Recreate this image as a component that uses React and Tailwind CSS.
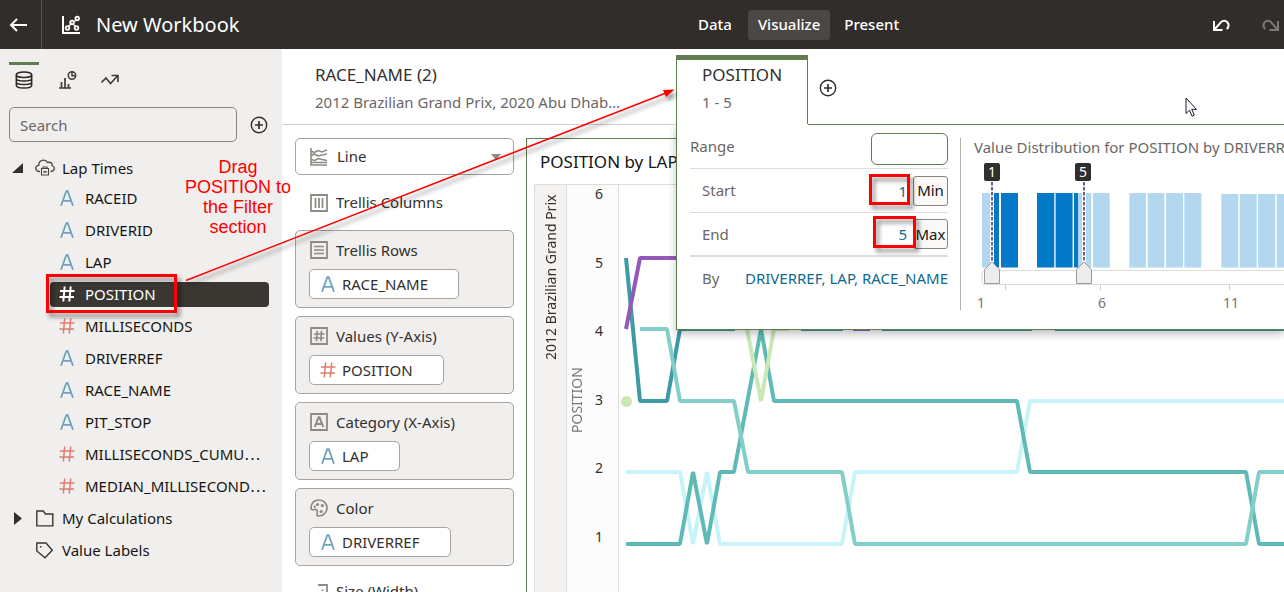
import React from "react";

const FONT = "font-['Noto_Sans','Open_Sans',sans-serif]";

const fields = [
  { name: "RACEID", type: "text" },
  { name: "DRIVERID", type: "text" },
  { name: "LAP", type: "text" },
  { name: "POSITION", type: "number", selected: true },
  { name: "MILLISECONDS", type: "number" },
  { name: "DRIVERREF", type: "text" },
  { name: "RACE_NAME", type: "text" },
  { name: "PIT_STOP", type: "text" },
  { name: "MILLISECONDS_CUMU", type: "number", cut: true },
  { name: "MEDIAN_MILLISECOND", type: "number", cut: true },
];

function TypeIcon({ type, selected }) {
  if (type === "number") {
    return (
      <svg width="16" height="16" viewBox="0 0 16 16" fill="none" strokeWidth={selected ? 2 : 1.5}
        className={selected ? "shrink-0 stroke-white" : "shrink-0 stroke-[#dd7d6d]"} aria-hidden="true">
        <path d="M5.7 .5 4.3 15.5M11.7 .5 10.3 15.5M1 5h14.5M.5 11H15" />
      </svg>
    );
  }
  return (
    <svg width="16" height="16" viewBox="0 0 16 16" fill="none" strokeWidth="1.8" className="shrink-0 stroke-[#6fa3bd]" aria-hidden="true">
      <path d="M2 15.800 7.300 1.200h1.400L14 15.800M3.800 10.800h8.400" />
    </svg>
  );
}

function PlusCircle() {
  return (
    <svg width="18" height="18" viewBox="0 0 18 18" fill="none" stroke="#33302d" strokeWidth="1.4" aria-hidden="true">
      <circle cx="9" cy="9" r="7.7" />
      <path d="M9 5v8M5 9h8" strokeWidth="1.7" />
    </svg>
  );
}

function Header() {
  return (
    <header className="flex h-[49px] shrink-0 items-center bg-[#312d2a] text-white">
      <button aria-label="Back" className="flex h-full w-[42px] items-center border-r border-[#5a5653] pl-[9px]">
        <svg width="20" height="16" viewBox="0 0 20 16" fill="none" stroke="white" strokeWidth="2">
          <path d="M18 8H2M8 2 2 8l6 6" />
        </svg>
      </button>
      <svg className="ml-5" width="18" height="20" viewBox="0 0 18 20" fill="none" stroke="white" strokeWidth="1.8" aria-hidden="true">
        <path d="M1 1v17h17" strokeWidth="2" />
        <path d="m6 12 4-4M11 9l3 3M12 7l3-3" strokeWidth="1.2" />
        <circle cx="5.5" cy="13" r="1.8" />
        <circle cx="10" cy="7.5" r="1.8" />
        <circle cx="14.5" cy="13" r="1.8" />
        <circle cx="15.2" cy="3.5" r="1.8" />
      </svg>
      <h1 className="ml-4 w-[592px] text-[20px]">New Workbook</h1>
      <nav className="flex h-[30px] items-center text-[15px] font-medium">
        <button className="h-full px-[10px]">Data</button>
        <button className="ml-[6px] h-full rounded-[3px] bg-[#4b4744] px-[10px]">Visualize</button>
        <button className="ml-[4px] h-full px-[10px]">Present</button>
      </nav>
      <div className="ml-auto flex gap-8">
        <button aria-label="Undo">
          <svg width="18" height="16" viewBox="0 0 18 16" fill="none" stroke="white" strokeWidth="2">
            <path d="M2 4v9h8.5M2.5 12.5 9 5.2c4-4.4 10.500 1.500 5.800 7" />
          </svg>
        </button>
        <button aria-label="Redo">
          <svg width="22" height="16" viewBox="0 0 22 16" fill="none" stroke="#7c7875" strokeWidth="2">
            <path d="M16 4v9H7.500M15.500 12.500 9 5.200c-4-4.400-10.500 1.500-5.800 7" />
          </svg>
        </button>
      </div>
    </header>
  );
}

function Sidebar() {
  return (
    <aside className="w-[282px] shrink-0 bg-[#f0efee] pt-[13px] text-[15px] text-[#161513]">
      <div className="flex h-[45px] pl-[9px]">
        <button aria-label="Data" className="flex h-[33px] w-[30px] items-center justify-center border-t-[3px] border-[#5f7d4f]">
          <svg width="18" height="18" viewBox="0 0 18 18" fill="none" stroke="#2b2826" strokeWidth="1.5">
            <ellipse cx="9" cy="3.800" rx="7.700" ry="2.800" />
            <path d="M1.300 3.800v10.400c0 3.700 15.400 3.700 15.400 0V3.800M1.300 7.300c0 3.700 15.400 3.700 15.400 0M1.300 10.800c0 3.700 15.400 3.700 15.400 0" />
          </svg>
        </button>
        <button aria-label="Visualizations" className="ml-5 flex h-9 w-[18px] items-center">
          <svg width="18" height="18" viewBox="0 0 18 18" fill="none" stroke="#3f3b38" strokeWidth="1.500">
            <path d="M0 17h12M2.500 17v-6M6 17V7M9.500 17v-4" strokeWidth="1.700" />
            <circle cx="13" cy="4.500" r="3.700" />
            <path d="M13 1v3.700h3.500" />
          </svg>
        </button>
        <button aria-label="Analytics" className="ml-6 flex h-9 w-[18px] items-center">
          <svg width="18" height="14" viewBox="0 0 18 14" fill="none" stroke="#3f3b38" strokeWidth="1.600">
            <path d="m.5 9.500 4.500-4.500 4.500 5.500L16.500 3M10.500 2.500H17V9" />
          </svg>
        </button>
      </div>
      <div className="flex items-center pl-[9px]">
        <input aria-label="Search" placeholder="Search"
          className="h-[35px] w-[228px] rounded-[5px] border border-[#8a8580] bg-transparent px-[10px] placeholder:text-[#6b6764]" />
        <button aria-label="Add data" className="ml-[13px]"><PlusCircle /></button>
      </div>
      <ul className="mt-3">
        <li className="flex h-7 items-center">
          <svg className="ml-3" width="11" height="10" viewBox="0 0 11 10" aria-hidden="true"><path d="M11 0v10H0z" fill="#33302d" /></svg>
          <svg className="ml-3" width="20" height="18" viewBox="0 0 20 18" fill="none" stroke="#4a4643" strokeWidth="1.300" aria-hidden="true">
            <path d="M5 12.500C-.5 12.500-.5 6.500 3.800 6.300 3.500 1 10.500-.5 12.500 3.500c4-1 5 1.500 4.500 3 3.500 1 3 6-1.500 6" />
            <path d="M6.500 9.500h7v6.500h-7zM8 9.500V8h4v1.500M9 14v-1.500h2V14" strokeWidth="1.100" />
          </svg>
          <span className="ml-[7px]">Lap Times</span>
        </li>
        {fields.map((f) => (
          <li key={f.name} className="flex h-8 items-center">
            <div className={"ml-[50px] mr-[13px] flex h-[25px] min-w-0 flex-1 items-center gap-[10px] rounded-[4px] pl-[9px] " +
              (f.selected ? "bg-[#3a3632] text-white" : "")}>
              <TypeIcon type={f.type} selected={f.selected} />
              <span className="whitespace-nowrap">{f.name}{f.cut && <span className="font-['Noto_Sans_CJK_JP',sans-serif]">…</span>}</span>
            </div>
          </li>
        ))}
        <li className="flex h-8 items-center">
          <svg className="ml-[14px]" width="8" height="13" viewBox="0 0 8 13" aria-hidden="true"><path d="M0 0v13l8-6.500z" fill="#33302d" /></svg>
          <svg className="ml-[14px]" width="18" height="17" viewBox="0 0 18 17" fill="none" stroke="#3a3632" strokeWidth="1.400" aria-hidden="true">
            <path d="M.8 15.900V1h6.400l2.300 3h7.300v11.900z" />
          </svg>
          <span className="ml-2">My Calculations</span>
        </li>
        <li className="flex h-8 items-center">
          <svg className="ml-9" width="18" height="17" viewBox="0 0 18 17" fill="none" stroke="#3a3632" strokeWidth="1.400" aria-hidden="true">
            <path d="M.8 1h9.200l6.300 7.200-7.300 7.500L.8 9z" />
            <circle cx="4.800" cy="4.800" r=".9" fill="#3a3632" stroke="none" />
          </svg>
          <span className="ml-2">Value Labels</span>
        </li>
      </ul>
    </aside>
  );
}

function BoxIcon({ kind }) {
  return (
    <svg width="18" height="18" viewBox="0 0 18 18" fill="none" stroke="#8f8a84" strokeWidth="1.500" className="shrink-0" aria-hidden="true">
      {kind !== "color" && <path d="M1 1h16v16H1z" strokeWidth="1.800" />}
      {kind === "columns" && <path d="M5.500 4v10M9 4v10M12.500 4v10" strokeWidth="1.800" />}
      {kind === "rows" && <path d="M4 5.500h10M4 9h10M4 12.500h10" strokeWidth="1.600" />}
      {kind === "values" && <path d="M7.200 3.800 6.500 14.200M11.500 3.800l-.7 10.400M3.800 7h10.700M3.500 11h10.700" strokeWidth="1.600" />}
      {kind === "category" && <path d="M4.800 14 8.500 4.300h1L13.200 14M6.200 11h5.600" strokeWidth="2" />}
      {kind === "color" && (
        <>
          <path d="M1 8.500C1.500 4 4.500 1 9 1c5 0 8 3.500 8 8s-3.500 8-8 8c-2 0-2.500-1-1.800-3C8 11.500 6.500 10 4.500 10.500 2 11.500.8 10.500 1 8.500z" strokeWidth="1.700" />
          <g fill="#8f8a84" stroke="none">
            <circle cx="7.500" cy="5.500" r="1.600" /><circle cx="12.300" cy="6.500" r="1.600" />
            <circle cx="11.200" cy="12.500" r="1.600" /><circle cx="4.700" cy="7.800" r="1.200" />
          </g>
        </>
      )}
    </svg>
  );
}

const dropTargets = [
  { kind: "rows", label: "Trellis Rows", item: "RACE_NAME", type: "text" },
  { kind: "values", label: "Values (Y-Axis)", item: "POSITION", type: "number" },
  { kind: "category", label: "Category (X-Axis)", item: "LAP", type: "text" },
  { kind: "color", label: "Color", item: "DRIVERREF", type: "text" },
];

function GrammarPanel() {
  return (
    <section className="ml-[13px] mt-[13px] w-[219px] shrink-0 text-[15px] text-[#33302d]">
      <div className="relative flex h-[37px] items-center rounded-[5px] border border-[#a8a39f]">
        <svg className="pointer-events-none absolute left-[14px]" width="17" height="18" viewBox="0 0 17 18" fill="none" stroke="#8f8a84" strokeWidth="1.600" aria-hidden="true">
          <path d="M1 0v17h16M1 3l3 1.500 4-2 4 1.500 5-2M1 8l3-2 4 2 4-1 5-1M1 11.500l4 1 3-2 4 1 5 1M1 14.500h16" />
        </svg>
        <select aria-label="Visualization type" className="h-full w-full appearance-none bg-transparent pl-[41px]">
          <option>Line</option>
        </select>
        <svg className="pointer-events-none absolute right-[12px]" width="10" height="6" viewBox="0 0 10 6" aria-hidden="true"><path d="M0 0h10L5 6z" fill="#8f8a84" /></svg>
      </div>
      <div className="flex h-[55px] items-center gap-2 pl-[15px]"><BoxIcon kind="columns" />Trellis Columns</div>
      <div className="flex flex-col gap-2">
        {dropTargets.map((t) => (
          <div key={t.kind} className="h-[78px] rounded-[5px] border border-[#a8a39f] bg-[#f0efee] pl-[13px] pt-2">
            <div className="flex h-[22px] items-center gap-2 pl-px"><BoxIcon kind={t.kind} />{t.label}</div>
            <button className="mt-2 flex h-[30px] items-center gap-[6px] rounded-[5px] border border-[#a8a39f] bg-white pl-[10px] pr-[30px]">
              <TypeIcon type={t.type} />{t.item}
            </button>
          </div>
        ))}
      </div>
      <div className="mt-[14px] flex h-[22px] items-center gap-2 pl-[15px]">
        <svg width="18" height="18" viewBox="0 0 18 18" fill="none" stroke="#8f8a84" strokeWidth="1.800" aria-hidden="true">
          <path d="M8 3h9v14H1v-6h7M12.500 7.500V9M12.500 12v1" />
        </svg>
        Size (Width)
      </div>
    </section>
  );
}

const series = [
  { color: "#c8f3f9", points: "626,472 680,472 693,544 707,472 720,544 842,544 855,472 1017,472 1030,401 1310,401" },
  { color: "#5fbab5", points: "626,544 680,544 693,472 707,544 720,472 734,472 761,329 774,401 1017,401 1030,472 1246,472 1259,544 1310,544" },
  { color: "#3c9ba4", points: "626,258 640,401 667,401 680,329 735,329" },
  { color: "#3c9ba4", points: "801,329 843,329" },
  { color: "#3c9ba4", points: "882,329 1032,329" },
  { color: "#3c9ba4", points: "1055,329 1310,329" },
  { color: "#83cec8", points: "640,329 667,329 680,401 734,401 748,472 842,472 855,544 1246,544 1259,472 1310,472" },
  { color: "#cae7b6", points: "747,329 761,401 774,329 789,329" },
  { color: "#9459b8", points: "626,329 640,258 700,258" },
  { color: "#9459b8", points: "853,329 870,329" },
];

function Chart() {
  return (
    <section className="ml-3 mt-[13px] min-w-0 flex-1 overflow-hidden border-l border-t border-[#5f7d4f] pl-[7px]">
      <h2 className="flex h-[45px] items-center pl-[6px] text-[17px] text-[#161513]">POSITION by LAP</h2>
      <div className="flex h-full border-t border-[#dfdddb] text-[#33302d]">
        <div className="flex w-[33px] shrink-0 justify-center border-x border-[#dfdddb] bg-[#f4f3f2] pt-3">
          <span className="h-[163px] rotate-180 whitespace-nowrap text-[14px] leading-5 [writing-mode:vertical-rl]">2012 Brazilian Grand Prix</span>
        </div>
        <div className="flex w-[52px] shrink-0 border-r border-[#dfdddb] bg-[#fcfcfc]">
          <span className="mt-[184px] h-16 rotate-180 text-[14px] leading-5 text-[#7a7673] [writing-mode:vertical-rl]">POSITION</span>
          <ol className="ml-2 flex h-[361px] flex-col justify-between text-[14px] leading-[18px]">
            {[6, 5, 4, 3, 2, 1].map((n) => <li key={n}>{n}</li>)}
          </ol>
        </div>
        <svg width="690" height="408" viewBox="619 185 690 408" fill="none" strokeWidth="4" strokeLinejoin="bevel" className="shrink-0" role="img" aria-label="Position by lap line chart">
          {series.map((s, i) => <polyline key={i} points={s.points} stroke={s.color} />)}
          <circle cx="626.500" cy="401.500" r="5.500" fill="#cae7b6" />
        </svg>
      </div>
    </section>
  );
}

const bars = [
  [982, 8, 193, 0], [994, 5, 193, 1], [1001, 17, 193, 1],
  [1037, 17.3, 193, 1], [1055.6, 17, 193, 1], [1074, 4, 193, 1], [1078, 13.3, 193, 0], [1093, 16.700, 193, 0],
  [1129.300, 16.700, 193, 0], [1147.700, 16.700, 193, 0], [1166, 17, 193, 0], [1184.300, 17, 193, 0],
  [1221.300, 17, 194, 0], [1239.700, 17, 194, 0], [1258, 17.300, 194, 0], [1276.700, 17, 194, 0],
];

function Histogram() {
  return (
    <svg width="330" height="156" viewBox="974 158 330 156" className="block text-[14px]" role="img" aria-label="Value distribution histogram">
      {bars.map(([x, w, y, on]) => (
        <rect key={x} x={x} y={y} width={w} height={267.500 - y} fill={on ? "#0579c9" : "#b3d7ee"} />
      ))}
      <path d="M1310 270.500H985q-3 0-3 3v8q0 3 3 3h325" fill="white" stroke="#dedcda" />
      <path d="M1005.500 285v5M1100.500 285v5M1229.500 285v5" stroke="#cfcdcb" />
      {[992, 1084].map((x, i) => (
        <g key={x}>
          <path d={`M${x} 192v70`} stroke="white" strokeWidth="4" />
          <path d={`M${x} 182v80`} stroke="#4c4a75" strokeWidth="1.700" strokeDasharray="3.500 1.500" />
          <path d={`M${x - 7.500} 283.500v-14l7.500-7.500 7.500 7.500v14z`} fill="#ecedef" stroke="#9b9b9b" />
          <rect x={x - 8 - i} y="163" width="16" height="18" rx="2" fill="#312f2e" />
          <text x={x - i} y="177" textAnchor="middle" fill="white">{i ? 5 : 1}</text>
        </g>
      ))}
      <g fill="#7a7673" textAnchor="middle">
        <text x="981" y="308">1</text>
        <text x="1102" y="308">6</text>
        <text x="1231" y="308">11</text>
      </g>
    </svg>
  );
}

function RangeRow({ id, label, value, action, last }) {
  return (
    <div className={"flex h-11 items-center pl-3 " + (last ? "border-b-2 border-[#dfdddb]" : "border-b border-[#dfdddb]")}>
      <label htmlFor={id} className="text-[#6b6764]">{label}</label>
      <input id={id} defaultValue={value} className="ml-auto mr-[6px] h-[30px] w-9 bg-transparent text-right text-[#0f6a8b]" />
      <button className="h-[30px] w-[35px] rounded-[3px] border border-[#8a8580] bg-[#fbf9f8] text-center text-[#161513]">{action}</button>
    </div>
  );
}

function FilterPopup() {
  return (
    <div className="absolute left-[394px] right-0 top-full z-10 flex h-[206px] overflow-hidden border-b border-l border-[#5f7d4f] bg-white pl-[13px] text-[15px] shadow-[0_4px_8px_rgba(0,0,0,0.25)]">
      <div className="w-[258px] shrink-0">
        <div className="flex h-[45px] items-center border-b border-[#dfdddb]">
          <label htmlFor="range" className="text-[#6b6764]">Range</label>
          <input id="range" className="ml-auto mt-[5px] h-8 w-[77px] rounded-[6px] border border-[#5f7d4f] px-2" />
        </div>
        <RangeRow id="start" label="Start" value="1" action="Min" />
        <RangeRow id="end" label="End" value="5" action="Max" last />
        <div className="flex h-[42px] items-center justify-between pl-3">
          <span className="text-[#6b6764]">By</span>
          <a href="#by" className="whitespace-nowrap text-[#0f6a8b]">DRIVERREF, LAP, RACE_NAME</a>
        </div>
      </div>
      <div className="ml-3 mt-[14px] h-[172px] shrink-0 border-l border-[#b5b1ad] pl-[13px] text-[#6b6764]">
        <div className="h-5 whitespace-nowrap leading-[18px]">Value Distribution for POSITION by DRIVERREF</div>
        <Histogram />
      </div>
    </div>
  );
}

function FilterBar() {
  return (
    <div className="relative flex h-[76px] shrink-0 border-b border-[#d3cfcb] bg-white">
      <button className="w-[394px] shrink-0 pl-[33px] pr-[54px] pt-[2px] text-left">
        <span className="block text-[17px] leading-7 text-[#33302d]">RACE_NAME (2)</span>
        <span className="block truncate text-[15px] leading-[26px] text-[#6b6764]">2012 Brazilian Grand Prix, 2020 Abu Dhabi Grand Prix</span>
      </button>
      <div className="flex min-w-0 flex-1">
        <button className="relative z-20 mt-[6px] w-[132px] shrink-0 border-x border-t-[5px] border-[#5f7d4f] bg-white pb-2 pl-[25px] text-left">
          <span className="block text-[17px] leading-7 text-[#33302d]">POSITION</span>
          <span className="block text-[15px] leading-[26px] text-[#6b6764]">1 - 5</span>
        </button>
        <div className="z-20 -mb-px flex flex-1 items-center border-b border-[#5f7d4f] bg-white pl-[11px] pt-[2px]">
          <button aria-label="Add filter"><PlusCircle /></button>
        </div>
      </div>
      <FilterPopup />
    </div>
  );
}

function Annotations() {
  return (
    <div className="pointer-events-none absolute inset-0 z-30 overflow-hidden">
      <svg width="1284" height="592" viewBox="0 0 1284 592" fill="none" className="block [filter:drop-shadow(3px_4px_2px_rgba(0,0,0,0.45))]" aria-hidden="true">
        <path d="M186 280.500 666 93" stroke="#fe0000" strokeWidth="1.400" />
        <path d="m674.500 89.500-8.500 7.500-3-7z" fill="#fe0000" />
        <g stroke="#fe0000" strokeWidth="3">
          <path d="M47.500 275.500h128v36h-128z" />
          <path d="M870.500 175.500h38v28h-38z" />
          <path d="M874.500 217.500h40v29h-40z" />
        </g>
      </svg>
      <p className="absolute left-[178px] top-[157px] w-[120px] text-center font-['Liberation_Sans',Arial,sans-serif] text-[18px] leading-5 text-[#fe0000]">
        Drag POSITION to the Filter section
      </p>
      <svg className="absolute left-[1185px] top-[97px]" width="13" height="21" viewBox="0 0 13 21" fill="white" stroke="#1c1a2b" strokeWidth="1" aria-hidden="true">
        <path d="M1 1v15.500l3.500-3.300 2.500 6 2.300-1-2.500-5.800h4.700z" />
      </svg>
    </div>
  );
}

export default function App() {
  return (
    <div className={"relative flex h-screen flex-col overflow-hidden bg-white " + FONT}>
      <Header />
      <div className="flex min-h-0 flex-1">
        <Sidebar />
        <main className="flex min-w-0 flex-1 flex-col">
          <FilterBar />
          <div className="flex min-h-0 flex-1">
            <GrammarPanel />
            <Chart />
          </div>
        </main>
      </div>
      <Annotations />
    </div>
  );
}
